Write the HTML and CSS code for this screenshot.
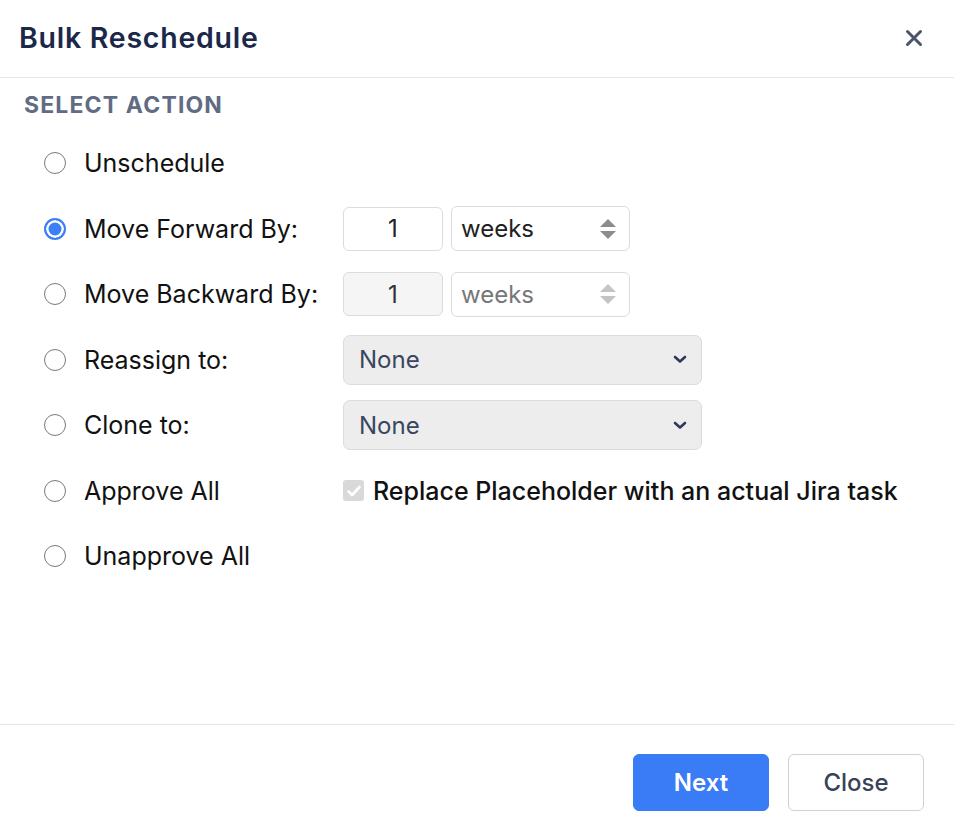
FILE: index.html
```html
<!DOCTYPE html>
<html>
<head>
<meta charset="utf-8">
<link rel="stylesheet" href="styles.css">
</head>
<body>
<div class="dialog">
  <header class="header">
    <h1 class="title">Bulk Reschedule</h1>
    <button class="close-x" aria-label="Close">
      <svg width="18" height="18" viewBox="0 0 18 18"><path d="M2.5 2.5L15.5 15.5M15.5 2.5L2.5 15.5" stroke="#4a5468" stroke-width="3" stroke-linecap="round"/></svg>
    </button>
  </header>
  <main class="content">
    <div class="section-label">SELECT ACTION</div>
    <div class="options">
      <span class="radio"></span><span class="label">Unschedule</span><span class="ctrl"></span>

      <span class="radio checked"></span><span class="label">Move Forward By:</span>
      <span class="ctrl pair">
        <span class="num">1</span>
        <span class="unit">weeks<span class="spin"><svg width="18" height="24" viewBox="0 0 18 24"><path d="M9 2L17 10H1Z" fill="#8c8c8c"/><path d="M9 22L17 14H1Z" fill="#8c8c8c"/></svg></span></span>
      </span>

      <span class="radio"></span><span class="label">Move Backward By:</span>
      <span class="ctrl pair">
        <span class="num disabled">1</span>
        <span class="unit disabled">weeks<span class="spin"><svg width="18" height="24" viewBox="0 0 18 24"><path d="M9 2L17 10H1Z" fill="#c4c4c4"/><path d="M9 22L17 14H1Z" fill="#c4c4c4"/></svg></span></span>
      </span>

      <span class="radio"></span><span class="label">Reassign to:</span>
      <span class="ctrl"><span class="select">None<svg class="chev" width="14" height="9" viewBox="0 0 14 9"><path d="M2 2L7 6.5L12 2" stroke="#2f3a57" stroke-width="2.6" fill="none" stroke-linecap="round" stroke-linejoin="round"/></svg></span></span>

      <span class="radio"></span><span class="label">Clone to:</span>
      <span class="ctrl"><span class="select">None<svg class="chev" width="14" height="9" viewBox="0 0 14 9"><path d="M2 2L7 6.5L12 2" stroke="#2f3a57" stroke-width="2.6" fill="none" stroke-linecap="round" stroke-linejoin="round"/></svg></span></span>

      <span class="radio"></span><span class="label">Approve All</span>
      <span class="ctrl check-row"><span class="checkbox"><svg width="16" height="14" viewBox="0 0 16 14"><path d="M2.5 7.5L6.2 11L13.5 3" stroke="#fff" stroke-width="2.6" fill="none" stroke-linecap="round" stroke-linejoin="round"/></svg></span><span class="check-label">Replace Placeholder with an actual Jira task</span></span>

      <span class="radio"></span><span class="label">Unapprove All</span><span class="ctrl"></span>
    </div>
  </main>
  <footer class="footer">
    <button class="btn primary">Next</button>
    <button class="btn secondary">Close</button>
  </footer>
</div>
</body>
</html>
```

FILE: styles.css
```css
* { box-sizing: border-box; }
html, body { margin: 0; padding: 0; background: #fff; }
body {
  font-family: Inter, "Noto Sans", "Liberation Sans", sans-serif;
  color: #111;
}
.dialog {
  height: 830px;
  display: flex;
  flex-direction: column;
}
.header {
  height: 78px;
  border-bottom: 1px solid #e4e6ea;
  display: flex;
  align-items: center;
  justify-content: space-between;
  padding: 0 30px 2px 19px;
}
.title {
  margin: 0;
  font-size: 28.5px;
  font-weight: 600;
  color: #1b2849;
  letter-spacing: 0.75px;
}
.close-x {
  border: 0;
  background: none;
  padding: 0;
  width: 18px;
  height: 18px;
  display: flex;
  margin-right: 1px;
}
.content {
  flex: 1;
  padding: 13px 0 0 0;
}
.section-label {
  padding-left: 24px;
  font-size: 23px;
  line-height: 28px;
  font-weight: 700;
  color: #616b84;
  letter-spacing: 1.15px;
}
.options {
  margin-top: 19px;
  padding-left: 44px;
  display: grid;
  grid-template-columns: 22px 241px auto;
  column-gap: 18px;
  grid-auto-rows: 50px;
  row-gap: 15.5px;
  align-items: center;
}
.radio {
  width: 22px;
  height: 22px;
  border-radius: 50%;
  border: 1.5px solid #7a7a7a;
  background: #fff;
  justify-self: start;
}
.radio.checked {
  border: 2px solid #3b7ef6;
  background: #3b7ef6;
  box-shadow: inset 0 0 0 2.5px #fff;
}
.label {
  font-size: 25px;
  color: #111;
  white-space: nowrap;
}
.ctrl { display: flex; align-items: center; }
.pair { gap: 8px; }
.num {
  width: 100px;
  height: 44px;
  border: 1px solid #dcdcdc;
  border-radius: 6px;
  background: #fff;
  font-size: 24px;
  color: #222;
  display: flex;
  align-items: center;
  justify-content: center;
}
.num.disabled { background: #f5f5f5; color: #333; }
.unit {
  width: 179px;
  height: 45px;
  border: 1px solid #dcdcdc;
  border-radius: 6px;
  background: #fff;
  font-size: 24px;
  color: #222;
  display: flex;
  align-items: center;
  justify-content: space-between;
  padding: 0 12px 0 9px;
}
.unit.disabled { color: #777; }
.spin { display: flex; }
.select {
  width: 359px;
  height: 50px;
  border: 1px solid #d8dce3;
  border-radius: 7px;
  background: #ededed;
  font-size: 24px;
  color: #3a4560;
  display: flex;
  align-items: center;
  justify-content: space-between;
  padding: 0 14px 0 15px;
}
.check-row { gap: 9px; }
.checkbox {
  width: 21px;
  height: 21px;
  border-radius: 3px;
  background: #d9d9d9;
  display: flex;
  align-items: center;
  justify-content: center;
}
.check-label {
  font-size: 25px;
  font-weight: 500;
  color: #111;
  white-space: nowrap;
}
.footer {
  height: 106px;
  border-top: 1px solid #e4e6ea;
  display: flex;
  justify-content: flex-end;
  align-items: flex-start;
  gap: 19px;
  padding: 29px 30px 0 0;
}
.btn {
  width: 136px;
  height: 57px;
  border-radius: 6px;
  font-family: Inter, "Noto Sans", "Liberation Sans", sans-serif;
  font-size: 24px;
  font-weight: 600;
  cursor: pointer;
}
.btn.primary {
  background: #3a7bf6;
  border: 1px solid #3a7bf6;
  color: #fff;
}
.btn.secondary {
  background: #fff;
  border: 1px solid #cdd2db;
  color: #394357;
  font-weight: 500;
}
```
